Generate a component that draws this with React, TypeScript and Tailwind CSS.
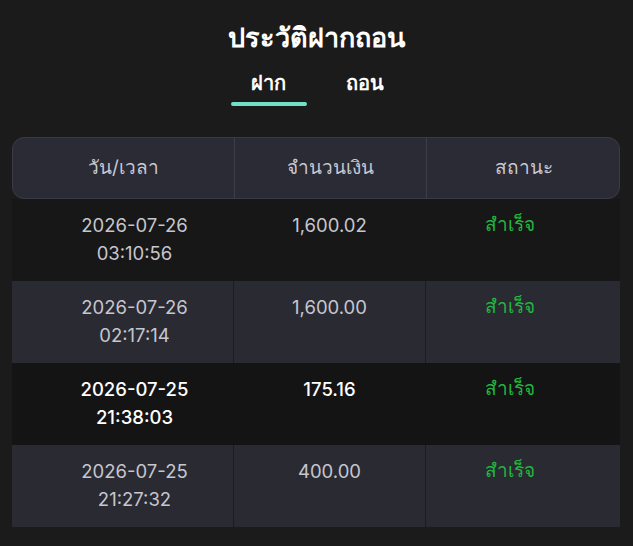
import React from "react";

const rows = [
  { d: "2026-07-26", t: "03:10:56", a: "1,600.02", s: "สำเร็จ", alt: false, hi: false },
  { d: "2026-07-26", t: "02:17:14", a: "1,600.00", s: "สำเร็จ", alt: true, hi: false },
  { d: "2026-07-25", t: "21:38:03", a: "175.16", s: "สำเร็จ", alt: false, hi: true },
  { d: "2026-07-25", t: "21:27:32", a: "400.00", s: "สำเร็จ", alt: true, hi: false },
];

export default function App() {
  return (
    <div
      className="w-[633px] h-[546px] bg-[#1b1b1b] overflow-hidden"
      style={{ fontFamily: "Inter, 'Noto Sans', sans-serif" }}
    >
      <div className="pt-[18px] text-center text-white text-[27px] font-bold leading-[40px]">
        ประวัติฝากถอน
      </div>
      <div className="flex justify-center gap-[20px] mt-[7px]">
        <div className="w-[76px] flex flex-col items-center">
          <div className="text-white text-[20px] font-bold leading-[36px]">ฝาก</div>
          <div className="w-[76px] h-[4px] rounded-full bg-[#72e0c6] mt-[1px]" />
        </div>
        <div className="w-[76px] flex flex-col items-center">
          <div className="text-white text-[20px] font-bold leading-[36px]">ถอน</div>
        </div>
      </div>
      <div className="mx-[12px] mt-[31px] w-[608px]">
        <div className="grid grid-cols-[222px_192px_194px] h-[62px] rounded-[12px] bg-[#2b2b35] border border-[#3a3a47] text-[#c9c9d2] text-[19px]">
          <div className="flex items-center justify-center border-r border-[#3d3d4a]">วัน/เวลา</div>
          <div className="flex items-center justify-center border-r border-[#3d3d4a]">จำนวนเงิน</div>
          <div className="flex items-center justify-center">สถานะ</div>
        </div>
        {rows.map((r, i) => (
          <div
            key={i}
            className={
              "grid grid-cols-[222px_192px_194px] h-[82px] text-[18.5px] leading-[28px] " +
              (r.alt ? "bg-[#2a2a33]" : r.hi ? "bg-[#141414]" : "bg-[#171717]") +
              (r.hi ? " text-white font-medium" : " text-[#c6c6ce]")
            }
          >
            <div className={"pt-[12px] pl-[24px] text-center border-r " + (r.alt ? "border-[#1c1c22]" : "border-transparent")}>
              <div>{r.d}</div>
              <div>{r.t}</div>
            </div>
            <div className={"pt-[12px] text-center border-r " + (r.alt ? "border-[#1c1c22]" : "border-transparent")}>
              {r.a}
            </div>
            <div className="pt-[12px] pr-[26px] text-center text-[#22b63e] font-normal text-[19px]">{r.s}</div>
          </div>
        ))}
      </div>
    </div>
  );
}
